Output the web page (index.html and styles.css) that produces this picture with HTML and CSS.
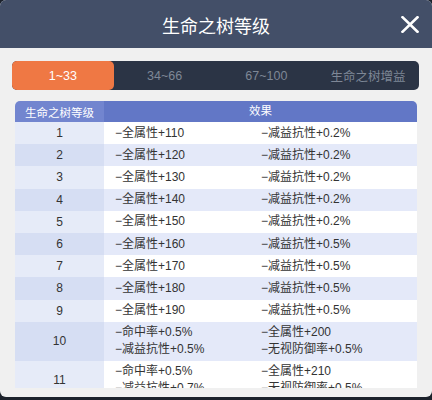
FILE: index.html
```html
<!DOCTYPE html>
<html lang="zh">
<head>
<meta charset="utf-8">
<link rel="stylesheet" href="styles.css">
</head>
<body>
<div class="modal">
  <div class="header">
    <div class="title">生命之树等级</div>
    <div class="close">
      <svg width="18" height="17" viewBox="0 0 18 17"><path d="M1.5 1.2 L16.5 15.8 M16.5 1.2 L1.5 15.8" stroke="#fff" stroke-width="2.6" stroke-linecap="square" fill="none"/></svg>
    </div>
  </div>
  <div class="tabs">
    <div class="tab active">1~33</div>
    <div class="tab">34~66</div>
    <div class="tab">67~100</div>
    <div class="tab">生命之树增益</div>
  </div>
  <div class="table">
    <div class="row head">
      <div class="lvl">生命之树等级</div>
      <div class="eff">效果</div>
    </div>
    <div class="row odd"><div class="lvl">1</div><div class="eff"><span>−全属性+110</span><span>−减益抗性+0.2%</span></div></div>
    <div class="row even"><div class="lvl">2</div><div class="eff"><span>−全属性+120</span><span>−减益抗性+0.2%</span></div></div>
    <div class="row odd"><div class="lvl">3</div><div class="eff"><span>−全属性+130</span><span>−减益抗性+0.2%</span></div></div>
    <div class="row even"><div class="lvl">4</div><div class="eff"><span>−全属性+140</span><span>−减益抗性+0.2%</span></div></div>
    <div class="row odd"><div class="lvl">5</div><div class="eff"><span>−全属性+150</span><span>−减益抗性+0.2%</span></div></div>
    <div class="row even"><div class="lvl">6</div><div class="eff"><span>−全属性+160</span><span>−减益抗性+0.5%</span></div></div>
    <div class="row odd"><div class="lvl">7</div><div class="eff"><span>−全属性+170</span><span>−减益抗性+0.5%</span></div></div>
    <div class="row even"><div class="lvl">8</div><div class="eff"><span>−全属性+180</span><span>−减益抗性+0.5%</span></div></div>
    <div class="row odd"><div class="lvl">9</div><div class="eff"><span>−全属性+190</span><span>−减益抗性+0.5%</span></div></div>
    <div class="row even tall"><div class="lvl">10</div><div class="eff"><span>−命中率+0.5%<br>−减益抗性+0.5%</span><span>−全属性+200<br>−无视防御率+0.5%</span></div></div>
    <div class="row odd tall"><div class="lvl">11</div><div class="eff"><span>−命中率+0.5%<br>−减益抗性+0.7%</span><span>−全属性+210<br>−无视防御率+0.5%</span></div></div>
  </div>
</div>
</body>
</html>
```
FILE: styles.css
```css
html, body {
  margin: 0;
  padding: 0;
  background: #1c222c;
}
body {
  width: 432px;
  height: 400px;
  overflow: hidden;
  font-family: "Liberation Sans", "Noto Sans CJK SC", sans-serif;
}
.modal {
  width: 432px;
  height: 397px;
  background: #f0f0f0;
  border-radius: 6px;
  overflow: hidden;
  display: flex;
  flex-direction: column;
}
.header {
  height: 48px;
  flex: none;
  background: #434f68;
  display: grid;
  grid-template-columns: 1fr auto 1fr;
  align-items: center;
}
.title {
  grid-column: 2;
  color: #fff;
  font-size: 18px;
  font-family: "Noto Sans CJK SC", sans-serif;
  line-height: 1;
  padding-top: 1px;
}
.close {
  grid-column: 3;
  justify-self: end;
  margin-right: 13px;
  display: flex;
  padding-top: 1px;
}
.tabs {
  margin: 13px 13px 0 12px;
  height: 29px;
  flex: none;
  background: #2b3445;
  border-radius: 5px;
  display: grid;
  grid-template-columns: repeat(4, 1fr);
}
.tab {
  display: flex;
  align-items: center;
  justify-content: center;
  color: #7e8796;
  font-size: 12.5px;
}
.tab.active {
  background: #ef7844;
  color: #fff;
  border-radius: 5px;
}
.table {
  margin: 11px 15px 0 15px;
  height: 287px;
  overflow: hidden;
  flex: none;
}
.row {
  display: grid;
  grid-template-columns: 89px 313px;
  height: 22.2px;
  font-size: 12px;
  color: #333;
}
.row.tall {
  height: 39px;
}
.row.head {
  height: 21px;
  color: #fff;
  font-size: 11.5px;
}
.head .lvl {
  background: #7285cf;
  border-top-left-radius: 5px;
}
.head .eff {
  background: #6277c6;
  border-top-right-radius: 5px;
  justify-content: center;
  padding-left: 0;
}
.lvl {
  display: flex;
  align-items: center;
  justify-content: center;
}
.eff {
  display: grid;
  grid-template-columns: 146px 1fr;
  align-items: center;
  padding-left: 11px;
  line-height: 17px;
}
.head .eff {
  display: flex;
}
.odd .lvl { background: #e6ebf8; }
.odd .eff { background: #ffffff; }
.even .lvl { background: #d6def3; }
.even .eff { background: #e4e9f9; }
```
